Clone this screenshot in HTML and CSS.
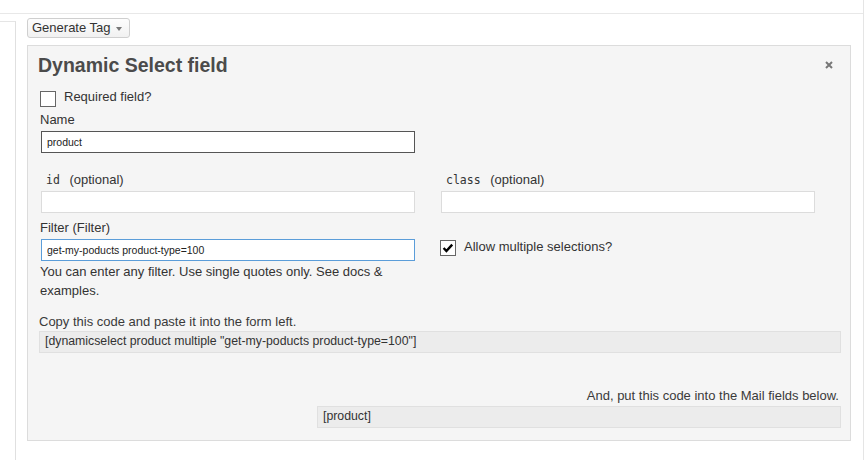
FILE: index.html
```html
<!DOCTYPE html>
<html>
<head>
<meta charset="utf-8">
<link rel="stylesheet" href="styles.css">
</head>
<body>
<div class="page">
  <div class="topbar"></div>
  <div class="body">
    <div class="stub"></div>
    <div class="content">
      <button class="gen-btn" type="button">Generate Tag<span class="caret"></span></button>
      <div class="panel">
        <div class="panel-head">
          <h3 class="panel-title">Dynamic Select field</h3>
          <span class="close" aria-label="close">
            <svg width="8" height="8" viewBox="0 0 8 8"><path d="M1 1 L7 7 M7 1 L1 7" stroke="#777" stroke-width="2" fill="none"/></svg>
          </span>
        </div>
        <div class="form">
          <label class="check-row req">
            <span class="cb"></span>
            <span class="check-text">Required field?</span>
          </label>
          <label class="field-label name-label">Name</label>
          <input class="text-input input-dark" type="text" value="product">
          <div class="grid">
            <div class="cell">
              <label class="field-label"><code>id</code> (optional)</label>
              <input class="text-input" type="text" value="">
            </div>
            <div class="cell">
              <label class="field-label"><code>class</code> (optional)</label>
              <input class="text-input" type="text" value="">
            </div>
            <div class="cell cell-filter">
              <label class="field-label">Filter (Filter)</label>
              <input class="text-input input-blue" type="text" value="get-my-poducts product-type=100">
              <div class="help">You can enter any filter. Use single quotes only. See docs &amp; examples.</div>
            </div>
            <div class="cell cell-multi">
              <label class="check-row">
                <span class="cb cb-checked">
                  <svg width="14" height="14" viewBox="0 0 14 14"><path d="M2.6 7 L5.4 10 L11.2 3.6" stroke="#000" stroke-width="2.4" fill="none" stroke-linejoin="miter"/></svg>
                </span>
                <span class="check-text">Allow multiple selections?</span>
              </label>
            </div>
          </div>
        </div>
        <div class="tags">
          <div class="tag-label">Copy this code and paste it into the form left.</div>
          <div class="tag-box">[dynamicselect product multiple "get-my-poducts product-type=100"]</div>
          <div class="mail-label">And, put this code into the Mail fields below.</div>
          <div class="mail-row">
            <div class="tag-box mail-box">[product]</div>
          </div>
        </div>
      </div>
    </div>
  </div>
</div>
</body>
</html>
```

FILE: styles.css
```css
html, body {
  margin: 0;
  padding: 0;
  background: #fff;
}
body {
  font-family: "Liberation Sans", Arial, sans-serif;
  font-size: 13px;
  color: #333;
}
.page {
  width: 864px;
  height: 460px;
  box-sizing: border-box;
  border-right: 1px solid #e5e5e5;
  display: flex;
  flex-direction: column;
}
.topbar {
  height: 13px;
  border-bottom: 1px solid #e8e8e8;
  flex-shrink: 0;
}
.body {
  display: flex;
  flex: 1;
}
.stub {
  width: 15px;
  margin-top: 7px;
  border-top: 1px solid #e5e5e5;
  border-right: 1px solid #e0e0e0;
  flex-shrink: 0;
}
.content {
  padding-left: 11px;
  padding-top: 4px;
}
.gen-btn {
  display: flex;
  align-items: center;
  height: 20px;
  box-sizing: border-box;
  margin: 0;
  padding: 0 7px 0 4px;
  border: 1px solid #cfcfcf;
  border-radius: 3px;
  background: linear-gradient(#fdfdfd, #f1f1f1);
  font-family: "Liberation Sans", Arial, sans-serif;
  font-size: 13px;
  line-height: 18px;
  color: #333;
}
.caret {
  width: 0;
  height: 0;
  margin-left: 5px;
  margin-top: 1px;
  border-left: 3.5px solid transparent;
  border-right: 3.5px solid transparent;
  border-top: 4px solid #777;
}
.panel {
  margin-top: 7px;
  width: 824px;
  box-sizing: border-box;
  border: 1px solid #dcdcdc;
  background: #f5f5f5;
  padding-bottom: 12px;
}
.panel-head {
  display: flex;
  align-items: center;
  justify-content: space-between;
  padding: 6px 17px 0 10px;
}
.panel-title {
  margin: 0;
  font-size: 19.5px;
  line-height: 26px;
  font-weight: bold;
  color: #4b4b4b;
}
.close {
  display: flex;
  width: 8px;
  height: 8px;
}
.form {
  padding-left: 12px;
}
.check-row {
  display: flex;
  align-items: flex-start;
  line-height: 16px;
}
.req {
  margin-top: 11px;
}
.cb {
  width: 16px;
  height: 16px;
  box-sizing: border-box;
  border: 1px solid #666;
  background: #fff;
  margin-top: 2px;
  margin-right: 8px;
  flex-shrink: 0;
  display: flex;
  align-items: center;
  justify-content: center;
}
.cb-checked {
  margin-top: 1px;
}
.field-label {
  display: block;
  line-height: 16px;
  margin-bottom: 3px;
  color: #333;
}
.name-label {
  margin-top: 5px;
}
code {
  font-family: "DejaVu Sans Mono", "Liberation Mono", monospace;
  font-size: 11.5px;
  padding: 3px 5px 2px;
  margin: 0 1px;
  color: #333;
}
.text-input {
  display: block;
  width: 374px;
  height: 22px;
  box-sizing: border-box;
  margin: 1px;
  padding: 0 5px;
  border: 1px solid #dcdcdc;
  background: #fff;
  font-family: "Liberation Sans", Arial, sans-serif;
  font-size: 10.5px;
  color: #222;
  outline: none;
  border-radius: 0;
}
.input-dark {
  border-color: #555;
}
.input-blue {
  border-color: #5b9dd9;
}
.grid {
  display: grid;
  grid-template-columns: 400px 400px;
  margin-top: 19px;
}
.cell-filter {
  padding-top: 6px;
}
.cell-multi {
  padding-top: 25px;
}
.help {
  width: 375px;
  line-height: 19px;
  color: #333;
}
.tags {
  padding: 14px 9px 0 11px;
}
.tag-label {
  line-height: 16px;
  color: #3a3a3a;
}
.tag-box {
  margin-top: 1px;
  height: 22px;
  box-sizing: border-box;
  border: 1px solid #e0e0e0;
  background: #ececec;
  padding: 0 6px 2px 5px;
  font-size: 12.3px;
  line-height: 18px;
  color: #333;
  white-space: nowrap;
}
.mail-label {
  margin-top: 35px;
  line-height: 16px;
  text-align: right;
  padding-right: 2px;
  color: #3a3a3a;
}
.mail-row {
  display: flex;
  justify-content: flex-end;
  margin-top: 2px;
}
.mail-box {
  margin-top: 0;
  width: 524px;
}
```
